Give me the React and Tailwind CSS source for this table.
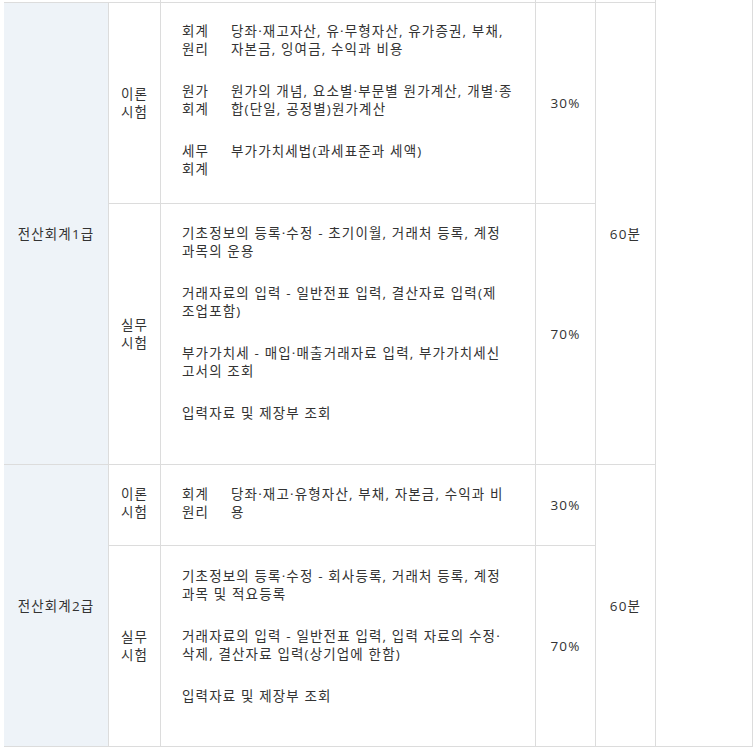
import React from 'react';

const font = { fontFamily: '"Open Sans", "Noto Sans CJK KR", sans-serif' };

const TheoryItem = ({ label, lines }) => (
  <div className="flex">
    <div className="w-[49px] shrink-0">
      {label.map((l, i) => (
        <div key={i}>{l}</div>
      ))}
    </div>
    <div>
      {lines.map((l, i) => (
        <div key={i}>{l}</div>
      ))}
    </div>
  </div>
);

const PracticeItem = ({ lines }) => (
  <div>
    {lines.map((l, i) => (
      <div key={i}>{l}</div>
    ))}
  </div>
);

const App = () => {
  const cell = 'border-r border-b border-[#dcdcdc]';
  const center = `${cell} flex items-center justify-center text-center`;

  return (
    <div className="min-h-screen bg-white text-[#333] text-[13.5px] leading-[18px] tracking-[1.15px]" style={font}>
      <div className="ml-[4px] grid grid-cols-[105px_52px_375px_60px_60px_97px] grid-rows-[3px_201px_261px_81px_201px]">
        {/* tail of the previous row */}
        <div className="col-start-1 row-start-1 border-b border-[#dcdcdc]" />
        <div className={`col-start-2 row-start-1 ${cell}`} />
        <div className={`col-start-3 row-start-1 ${cell}`} />
        <div className={`col-start-4 row-start-1 ${cell}`} />
        <div className={`col-start-5 row-start-1 ${cell}`} />
        <div className={`col-start-6 row-start-1 row-span-5 ${cell}`} />

        {/* 전산회계1급 */}
        <div className={`col-start-1 row-start-2 row-span-2 bg-[#eef3f8] ${center}`}>전산회계1급</div>
        <div className={`col-start-2 row-start-2 ${center}`}>
          <div>이론<br />시험</div>
        </div>
        <div className={`col-start-3 row-start-2 ${cell} pl-[21px] pt-[19px] whitespace-nowrap flex flex-col gap-[24px]`}>
          <TheoryItem
            label={['회계', '원리']}
            lines={['당좌·재고자산, 유·무형자산, 유가증권, 부채,', '자본금, 잉여금, 수익과 비용']}
          />
          <TheoryItem
            label={['원가', '회계']}
            lines={['원가의 개념, 요소별·부문별 원가계산, 개별·종', '합(단일, 공정별)원가계산']}
          />
          <TheoryItem label={['세무', '회계']} lines={['부가가치세법(과세표준과 세액)']} />
        </div>
        <div className={`col-start-4 row-start-2 ${center}`}>30%</div>
        <div className={`col-start-5 row-start-2 row-span-2 ${center}`}>60분</div>

        <div className={`col-start-2 row-start-3 ${center}`}>
          <div>실무<br />시험</div>
        </div>
        <div className={`col-start-3 row-start-3 ${cell} pl-[21px] pt-[20px] whitespace-nowrap flex flex-col gap-[24px]`}>
          <PracticeItem lines={['기초정보의 등록·수정 - 초기이월, 거래처 등록, 계정', '과목의 운용']} />
          <PracticeItem lines={['거래자료의 입력 - 일반전표 입력, 결산자료 입력(제', '조업포함)']} />
          <PracticeItem lines={['부가가치세 - 매입·매출거래자료 입력, 부가가치세신', '고서의 조회']} />
          <PracticeItem lines={['입력자료 및 제장부 조회']} />
        </div>
        <div className={`col-start-4 row-start-3 ${center}`}>70%</div>

        {/* 전산회계2급 */}
        <div className={`col-start-1 row-start-4 row-span-2 bg-[#eef3f8] ${center}`}>전산회계2급</div>
        <div className={`col-start-2 row-start-4 ${cell} pt-[20px] text-center`}>
          <div>이론<br />시험</div>
        </div>
        <div className={`col-start-3 row-start-4 ${cell} pl-[21px] pt-[20px] whitespace-nowrap`}>
          <TheoryItem
            label={['회계', '원리']}
            lines={['당좌·재고·유형자산, 부채, 자본금, 수익과 비', '용']}
          />
        </div>
        <div className={`col-start-4 row-start-4 ${center}`}>30%</div>
        <div className={`col-start-5 row-start-4 row-span-2 ${center}`}>60분</div>

        <div className={`col-start-2 row-start-5 ${center}`}>
          <div>실무<br />시험</div>
        </div>
        <div className={`col-start-3 row-start-5 ${cell} pl-[21px] pt-[21px] whitespace-nowrap flex flex-col gap-[24px]`}>
          <PracticeItem lines={['기초정보의 등록·수정 - 회사등록, 거래처 등록, 계정', '과목 및 적요등록']} />
          <PracticeItem lines={['거래자료의 입력 - 일반전표 입력, 입력 자료의 수정·', '삭제, 결산자료 입력(상기업에 한함)']} />
          <PracticeItem lines={['입력자료 및 제장부 조회']} />
        </div>
        <div className={`col-start-4 row-start-5 ${center}`}>70%</div>
      </div>
    </div>
  );
};

export default App;
